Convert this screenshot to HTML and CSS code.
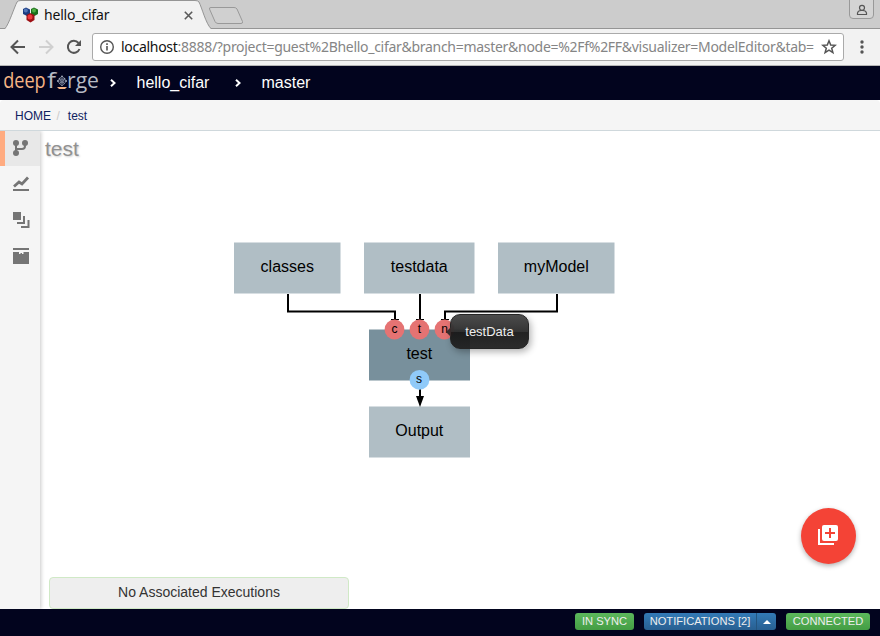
FILE: index.html
```html
<!DOCTYPE html>
<html lang="en">
<head>
<meta charset="utf-8">
<title>hello_cifar</title>
<link rel="stylesheet" href="styles.css">
</head>
<body>
<div class="window">
  <header class="tabs">
    <svg class="tab-art" width="880" height="29" viewBox="0 0 880 29">
      <path d="M0 28.5H880" stroke="#959595"/>
      <path d="M5 29C9 24 14 8 17 2Q18 .5 21 .5H195Q198 .5 199 2C202 8 206 24 211 29Z" fill="#f2f2f2"/>
      <path d="M0 28.5H5C9 24 14 8 17 2Q18 .5 21 .5H195Q198 .5 199 2C202 8 206 24 211 28.5" fill="none" stroke="#959595"/>
      <path d="M211 7.500H234Q236 7.500 237 9L242.500 21.500Q243 23.500 241 23.500H218Q216 23.500 215 21.500L209.500 9Q209 7.500 211 7.500Z" fill="#d0d0d0" stroke="#999"/>
      <path d="M849.500 0V15Q849.500 18.500 853 18.500H870Q873.500 18.500 873.500 15V0" fill="#d4d4d4" stroke="#999"/>
      <circle cx="862" cy="7.800" r="2.500" fill="none" stroke="#555" stroke-width="1.200"/>
      <path d="M857.500 14.500V13Q858 10.500 861 10.500H863Q866 10.500 866.500 13V14.500Z" fill="none" stroke="#555" stroke-width="1.200"/>
    </svg>
    <div class="tab">
      <svg width="16" height="16" viewBox="0 0 16 16">
        <path d="M1 2 4 .5 8 2.500V7L5 9 1 7Z" fill="#1c3e82"/><circle cx="3.800" cy="3.500" r="2" fill="#5377ba"/>
        <path d="M9 2 12 .5 16 2.500V7L12.500 9 9 7Z" fill="#1d6e1d"/><circle cx="12" cy="3.500" r="2" fill="#4fae42"/>
        <path d="M4.500 8 8 6 12.500 8V13L8.500 15.500 4.500 13Z" fill="#9e1014"/><circle cx="8" cy="10" r="2.500" fill="#f0393e"/>
      </svg>
      <span class="tab-title">hello_cifar</span>
      <svg class="tab-close" width="9" height="9" viewBox="0 0 9 9"><path d="M.8.8 8.200 8.200M8.200.8.8 8.200" stroke="#5a5a5a" stroke-width="1.600"/></svg>
    </div>
  </header>
  <div class="toolbar">
    <svg class="nav" width="92" height="37" viewBox="0 29 92 37" fill="none" stroke-width="2">
      <path d="M25 47H12M18 40.500 11.500 47 18 53.500" stroke="#555"/>
      <path d="M39 47H52M46 40.500 52.500 47 46 53.500" stroke="#d0d0d0"/>
      <path d="M78.500 43A6 6 0 1 0 79.500 49" stroke="#555"/><path d="M81 40V46H75Z" fill="#555"/>
    </svg>
    <div class="address">
      <svg width="16" height="16" viewBox="0 0 16 16"><circle cx="8" cy="8" r="6.300" fill="none" stroke="#555" stroke-width="1.400"/><path d="M8 7V11.500M8 4.300V5.900" stroke="#555" stroke-width="1.600"/></svg>
      <span class="url"><b>localhost</b>:8888/?project=guest%2Bhello_cifar&amp;branch=master&amp;node=%2Ff%2FF&amp;visualizer=ModelEditor&amp;tab=</span>
      <svg class="star" width="16" height="16" viewBox="0 0 16 16"><path d="M8 1.800 9.700 6 14.200 6.300 10.700 9.200 11.900 13.600 8 11.200 4.100 13.600 5.300 9.200 1.800 6.300 6.300 6Z" fill="none" stroke="#555" stroke-width="1.500"/></svg>
    </div>
    <svg class="dots" width="4" height="14" viewBox="0 0 4 14" fill="#555"><circle cx="2" cy="2" r="1.700"/><circle cx="2" cy="7" r="1.700"/><circle cx="2" cy="12" r="1.700"/></svg>
  </div>
  <nav class="appbar">
    <svg class="logo" width="110" height="34" viewBox="0 66 110 34">
      <text x="3.200" y="87.500" textLength="42.500" lengthAdjust="spacingAndGlyphs" fill="#f5b485">deep</text>
      <text x="47" y="87.500" textLength="9" lengthAdjust="spacingAndGlyphs" fill="#b6bac4">f</text>
      <text x="67" y="87.500" textLength="32" lengthAdjust="spacingAndGlyphs" fill="#b6bac4">rge</text>
      <g fill="none" stroke="#8790a4" stroke-width=".8"><path d="M62 76 66.500 81 62 86 57.500 81Z"/><path d="M62 78V86M59 79 65 84M65 79 59 84"/><circle cx="62" cy="81" r="2"/></g>
      <g fill="#9aa2b3"><circle cx="62" cy="76.500" r="1"/><circle cx="58" cy="81" r="1"/><circle cx="66" cy="81" r="1"/><circle cx="59.500" cy="78.500" r=".8"/><circle cx="64.500" cy="78.500" r=".8"/></g>
      <path d="M57 87H67L65 89H59Z" fill="#f5b485"/>
    </svg>
    <svg class="chevron" width="6" height="8" viewBox="0 0 6 8"><path d="M1 .8 4.500 4 1 7.200" fill="none" stroke="#fff" stroke-width="2"/></svg>
    <span class="project">hello_cifar</span>
    <svg class="chevron" width="6" height="8" viewBox="0 0 6 8"><path d="M1 .8 4.500 4 1 7.200" fill="none" stroke="#fff" stroke-width="2"/></svg>
    <span class="branch">master</span>
  </nav>
  <div class="crumbs"><span>HOME</span><i>/</i><span>test</span></div>
  <main>
    <aside>
      <div class="item active"><svg width="18" height="18" viewBox="0 0 18 18"><g fill="#757575"><circle cx="4" cy="4" r="3"/><circle cx="13" cy="4" r="3"/><circle cx="4" cy="14" r="3"/></g><path d="M4 4V14M13 4V7Q13 10 10 10H4" fill="none" stroke="#757575" stroke-width="2"/></svg></div>
      <div class="item"><svg width="18" height="18" viewBox="0 0 18 18"><path d="M1 15H17" stroke="#757575" stroke-width="2"/><path d="M2 11.500 7 7 10 9 16 2.500" fill="none" stroke="#757575" stroke-width="2.800"/></svg></div>
      <div class="item"><svg width="18" height="18" viewBox="0 0 18 18"><path d="M1 1H9V9H1Z" fill="#757575"/><path d="M12 5V12H5M16.500 9V16H9" fill="none" stroke="#757575" stroke-width="2"/></svg></div>
      <div class="item"><svg width="18" height="18" viewBox="0 0 18 18"><path d="M1 1H17V3H1ZM1 5H7V7H8.500V6H10V7H11.500V5H17V17H1Z" fill="#757575"/></svg></div>
    </aside>
    <section class="stage">
      <h1>test</h1>
      <svg class="graph" width="839" height="478" viewBox="41 131 839 478">
        <g class="data">
          <rect x="234" y="242.500" width="106.500" height="51"/><rect x="364" y="242.500" width="110.500" height="51"/><rect x="498" y="242.500" width="116.500" height="51"/><rect x="369" y="406.500" width="101" height="51"/>
        </g>
        <rect x="369" y="329.500" width="101" height="51" fill="#78909c"/>
        <path d="M288 294V311.500H395V321M420 294V321M557 294V311.500H445V321M420 388V400" fill="none" stroke="#000" stroke-width="2"/>
        <path d="M391 319.500H399M416 319.500H424M441 319.500H449" stroke="#000"/>
        <path d="M416 396H424L420 407Z"/>
        <g fill="#e57373"><circle cx="394.500" cy="329.500" r="9.900"/><circle cx="419.500" cy="329.500" r="9.900"/><circle cx="444.500" cy="329.500" r="9.900"/></g>
        <circle cx="419.500" cy="379.800" r="9.900" fill="#90caf9"/>
        <g class="names"><text x="287.300" y="272">classes</text><text x="419.300" y="272">testdata</text><text x="556.300" y="272">myModel</text><text x="419.300" y="359">test</text><text x="419.300" y="436">Output</text></g>
        <g class="ports"><text x="394.500" y="333">c</text><text x="419.500" y="333">t</text><text x="444.500" y="333">n</text><text x="419" y="383">s</text></g>
      </svg>
      <div class="tip">testData</div>
      <button class="add" aria-label="Add"><svg width="22" height="22" viewBox="0 0 22 22"><path d="M2 5V20H17" fill="none" stroke="#fff" stroke-width="2"/><rect x="5" y="1" width="16" height="16" rx="2" fill="#fff"/><path d="M13 4V14M8 9H18" stroke="#f44336" stroke-width="2"/></svg></button>
      <div class="executions">No Associated Executions</div>
    </section>
  </main>
  <footer><span class="badge sync">IN SYNC</span><span class="badge notes"><span>NOTIFICATIONS [2]</span><i></i></span><span class="badge conn">CONNECTED</span></footer>
</div>
</body>
</html>
```
FILE: styles.css
```css
* { box-sizing: border-box; }
body { margin: 0; font-family: "Liberation Sans", Arial, sans-serif; }
svg { flex: none; display: block; }
.window { width: 880px; height: 636px; display: flex; flex-direction: column; overflow: hidden; background: #fff; }
.tabs { position: relative; height: 29px; background: #ccc; }
.tab-art { position: absolute; left: 0; top: 0; }
.tab { position: relative; width: 193px; height: 29px; padding-left: 22px; display: flex; align-items: center; }
.tab-title { margin-left: 6px; font: 14px/28px "Noto Sans", sans-serif; letter-spacing: -.18px; color: #111; }
.tab-close { margin: 2px 0 0 auto; }
.toolbar { height: 37px; display: flex; align-items: center; background: #f2f2f2; border-bottom: 1px solid #b6b6b6; }
.address { width: 752px; height: 28px; padding: 0 6px; display: flex; align-items: center; background: #fff; border: 1px solid #aaa; border-radius: 3px; }
.url { width: 695px; margin-left: 6px; white-space: nowrap; font: 14px/26px "Noto Sans", sans-serif; letter-spacing: -.29px; color: #858585; }
.url b { font-weight: 400; color: #111; }
.star { margin-left: 5px; }
.dots { margin-left: 16px; }
.appbar { height: 34px; display: flex; align-items: center; color: #fff; background: #02041e; font-size: 16px; }
.logo { overflow: visible; }
.logo text { font: 400 21px "Open Sans", "Noto Sans", sans-serif; }
.project { width: 98.500px; margin-left: 20.500px; }
.branch { margin-left: 20.500px; }
.crumbs { height: 31px; padding: 2px 0 0 15px; display: flex; align-items: center; background: #f5f5f5; border-bottom: 1px solid #cfd8dc; border-radius: 4px 4px 0 0; color: #0f2260; font-size: 12px; }
.crumbs i { margin: 0 8px 0 5.500px; color: #ccc; font-style: normal; }
main { flex: 1; display: flex; min-height: 0; }
aside { position: relative; z-index: 1; width: 40px; background: #f5f5f5; box-shadow: 1px 0 4px rgba(0, 0, 0, .22); clip-path: inset(0 -6px 0 0); }
.item { height: 36px; padding-left: 12px; display: flex; align-items: center; }
.active { height: 35px; padding: 0 0 1px 7px; border-left: 5px solid #ffab80; background: #e8e8e8; }
.stage { position: relative; flex: 1; background: #fff; }
h1 { position: absolute; left: 5px; top: 5px; margin: 0; font-size: 21px; line-height: 26px; font-weight: 400; color: #919191; text-shadow: 1px 1px 2px #ccc; }
.graph { margin-left: 1px; }
.data rect { fill: #b0bec5; }
.names text, .ports text { text-anchor: middle; fill: #000; }
.names { font-size: 16px; }
.ports { font-size: 12px; }
.tip { position: absolute; left: 410px; top: 183px; width: 79px; height: 35px; border: 1px solid #252525; border-radius: 10px; background: linear-gradient(rgba(72, 72, 72, .98), rgba(44, 44, 44, .96) 50%, rgba(22, 22, 22, .95) 51%, rgba(32, 32, 32, .95)); box-shadow: 2px 3px 7px rgba(0, 0, 0, .3); color: #eee; font-size: 13px; line-height: 33px; text-align: center; }
.tip::before { content: ""; position: absolute; left: -5px; top: 12px; border: 5px solid transparent; border-left: 0; border-right-color: #392d2d; }
.add { position: absolute; left: 761px; top: 377px; width: 55px; height: 56px; padding: 0 2px 2px 0; display: flex; align-items: center; justify-content: center; border: 0; border-radius: 50%; background: #f44336; box-shadow: 0 2px 5px rgba(0, 0, 0, .3); }
.executions { position: absolute; left: 9px; bottom: 0; width: 300px; height: 32px; border: 1px solid #d0e9c6; border-radius: 4px; background: #eee; color: #333; font-size: 14px; line-height: 29px; text-align: center; }
footer { height: 27px; padding: 4px 10px 0 0; display: flex; justify-content: flex-end; gap: 10px; background: #02041e; }
.badge { height: 17px; line-height: 16px; border-radius: 3px; display: flex; align-items: flex-start; justify-content: center; color: #eee; font-size: 11.15px; background: linear-gradient(#5cb85c, #449d44); white-space: nowrap; }
.sync { width: 59px; }
.conn { width: 84px; }
.notes { width: 132px; align-items: center; background: linear-gradient(#337ab7, #285f91); }
.notes span { width: 113px; text-align: center; line-height: 17px; border-right: 1px solid #245580; }
.notes i { margin: 0 auto; border: 4px solid transparent; border-top: 0; border-bottom-color: #fff; }
```
